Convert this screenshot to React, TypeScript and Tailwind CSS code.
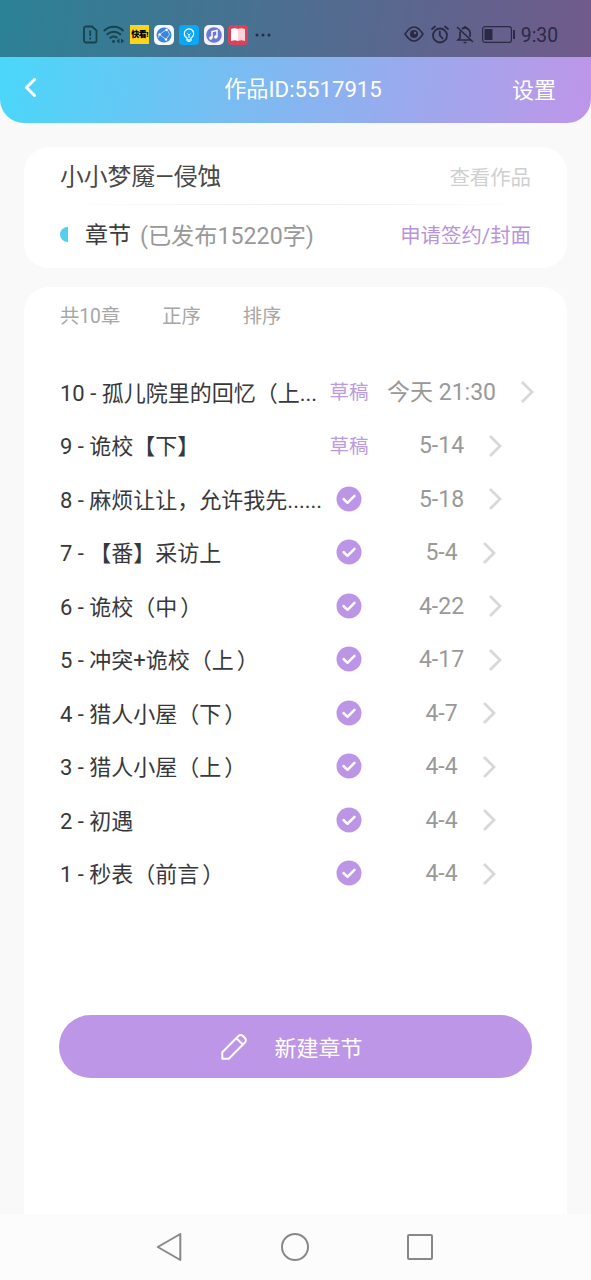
import React from "react";

interface chapterProps {
  title: string;
  date: string;
  draft?: boolean;
}

const chapters: chapterProps[] = [
  { title: "10 - 孤儿院里的回忆（上...", date: "今天 21:30", draft: true },
  { title: "9 - 诡校【下】", date: "5-14", draft: true },
  { title: "8 - 麻烦让让，允许我先......", date: "5-18" },
  { title: "7 - 【番】采访上", date: "5-4" },
  { title: "6 - 诡校（中）", date: "4-22" },
  { title: "5 - 冲突+诡校（上）", date: "4-17" },
  { title: "4 - 猎人小屋（下）", date: "4-7" },
  { title: "3 - 猎人小屋（上）", date: "4-4" },
  { title: "2 - 初遇", date: "4-4" },
  { title: "1 - 秒表（前言）", date: "4-4" },
];

// STATUS BAR
const StatusBar: React.FC = () => {
  return (
    <div className="h-[57px] bg-black/40 flex items-center justify-between pl-[83px] pr-[33px] pt-3">
      <div className="flex items-center">
        <svg width="15" height="19" viewBox="0 0 15 19" fill="none" stroke="#17434f" strokeWidth="1.800">
          <path d="M3 1.500h6l4.500 4v10a2 2 0 0 1-2 2H3a2 2 0 0 1-2-2v-12a2 2 0 0 1 2-2z" />
          <path d="M7.200 5.500v5.500M7.200 12.500v2" />
        </svg>
        <svg className="ml-[5px]" width="22" height="19" viewBox="0 0 22 19" fill="none" stroke="#17434f" strokeWidth="2" strokeLinecap="round">
          <path d="M1.500 5.500a13.500 13.500 0 0 1 18.500 0M4.300 9.300a9.500 9.500 0 0 1 13 0M7.300 12.800a5.500 5.500 0 0 1 6.500-.3" />
          <circle cx="10.500" cy="16.500" r="1.400" fill="#17434f" stroke="none" />
          <path d="M16.500 13.500v5l-3-2.500zM18 13.500l3.200 2.500-3.200 2.500z" fill="#17434f" stroke="none" />
        </svg>
        <div className="ml-[5px] size-[19px] bg-[#fbd51b] flex items-center justify-center">
          <span className="text-[8px] leading-none font-black text-black tracking-[-0.500px] whitespace-nowrap">快看!</span>
        </div>
        <svg className="ml-[5px]" width="20" height="20" viewBox="0 0 20 20">
          <rect width="20" height="20" rx="5" fill="#f4f9fd" />
          <circle cx="10" cy="10" r="7.500" fill="#3b86dd" />
          <path d="M13 4L5.500 9.500l6.500 5 3.500-5zM5.500 9.500L4 13" fill="none" stroke="#d5e8fa" strokeWidth=".8" />
          <circle cx="5.500" cy="9.500" r="1.200" fill="#fff" />
          <circle cx="12.500" cy="5" r="1.200" fill="#fff" />
          <circle cx="12" cy="14.500" r="1.200" fill="#fff" />
        </svg>
        <svg className="ml-[5px]" width="20" height="20" viewBox="0 0 20 20" fill="none" stroke="#fff" strokeWidth="1.300">
          <rect width="20" height="20" rx="4" fill="#0da8f3" stroke="none" />
          <path d="M8 12.800A4.700 4.700 0 1 1 12 12.800V15H8z" />
          <path d="M8.500 8.500L10 10l1.500-1.500M10 10v3M8.500 16.500h3" strokeWidth="1" />
        </svg>
        <svg className="ml-[5px]" width="20" height="20" viewBox="0 0 20 20">
          <rect width="20" height="20" rx="5" fill="#f3f2fc" />
          <circle cx="10" cy="10" r="7.800" fill="#6a78d6" />
          <path d="M8 13V6.500l5-1V12" fill="none" stroke="#fff" strokeWidth="1.500" />
          <circle cx="6.800" cy="13" r="1.700" fill="#fff" />
          <circle cx="11.800" cy="12" r="1.700" fill="#fff" />
        </svg>
        <svg className="ml-[4px]" width="20" height="20" viewBox="0 0 20 20">
          <rect width="20" height="20" rx="4" fill="#d8435c" />
          <path d="M3 4q4-1.500 7 0v12q-3-1.500-7 0z" fill="#fff" />
          <path d="M10 4q3-1.500 7 0v12q-4-1.500-7 0z" fill="#fbd3d9" />
        </svg>
        <svg className="ml-[7px]" width="16" height="4" viewBox="0 0 16 4" fill="#232f47">
          <circle cx="2" cy="2" r="1.500" />
          <circle cx="8" cy="2" r="1.500" />
          <circle cx="14" cy="2" r="1.500" />
        </svg>
      </div>

      <div className="flex items-center text-[#2b2a45]">
        <svg width="20" height="16" viewBox="0 0 20 16" fill="none" stroke="currentColor" strokeWidth="1.500">
          <path d="M1 8q9-14 18 0q-9 14-18 0z" />
          <circle cx="10" cy="8" r="4" fill="currentColor" stroke="none" />
          <circle cx="11" cy="7" r="1.200" fill="#63658f" stroke="none" />
        </svg>
        <svg className="ml-[7px]" width="18" height="19" viewBox="0 0 18 19" fill="none" stroke="currentColor" strokeWidth="1.800" strokeLinecap="round">
          <circle cx="9" cy="10.500" r="7" />
          <path d="M8.800 6.500v4l2.800 2.800M1 4l3-2.500M17 4l-3-2.500" />
        </svg>
        <svg className="ml-[7px]" width="18" height="19" viewBox="0 0 18 19" fill="none" stroke="currentColor" strokeWidth="1.700">
          <path d="M1 2l16 15M4 6.500V13l-2 2h12.500M6 4Q9 1.500 12 4t2 5v3M9 1v2M7.500 17.500h3" />
        </svg>
        <svg className="ml-[8px]" width="34" height="17" viewBox="0 0 34 17">
          <rect x=".6" y=".6" width="28.800" height="15.800" rx="2.500" fill="none" stroke="currentColor" strokeWidth="1.200" />
          <rect x="2.500" y="3" width="8" height="11" fill="currentColor" />
          <rect x="31" y="4" width="2" height="9" fill="currentColor" />
        </svg>
        <span className="ml-[5px] pt-[2px] text-[19.300px] leading-none">9:30</span>
      </div>
    </div>
  );
};

// HEADER
const Header: React.FC = () => {
  return (
    <div className="h-[123px] rounded-b-[24px] overflow-hidden bg-[linear-gradient(100deg,#48d8f9_0%,#bf95e8_100%)]">
      <StatusBar />
      <div className="h-[66px] grid grid-cols-[1fr_auto_1fr] items-center pl-6 pr-[35px] text-white">
        <svg className="mb-1" width="13" height="20" viewBox="0 0 13 20" fill="none" stroke="#fff" strokeWidth="3" strokeLinecap="round" strokeLinejoin="round">
          <path d="M10.500 1.500L2.500 9.500l8 8" />
        </svg>
        <p className="text-[22.200px] pl-[26px]">作品ID:5517915</p>
        <p className="text-[22px] text-right">设置</p>
      </div>
    </div>
  );
};

// WORK CARD
const WorkCard: React.FC = () => {
  return (
    <div className="mx-6 mt-6 h-[121px] bg-white rounded-[25px] px-9">
      <div className="h-[57px] pt-[5px] flex items-center justify-between">
        <p className="text-[23.800px] text-[#48484a]">小小梦魇—侵蚀</p>
        <p className="text-[20.400px] text-[#cfcfcf]">查看作品</p>
      </div>
      <div className="h-px bg-linear-to-r from-white via-[#ececec] to-white" />
      <div className="h-[60px] pt-[2px] flex items-center">
        <div className="mb-[4px] w-2 h-[15px] rounded-l-full bg-[#50d0ee]" />
        <p className="ml-[17px] text-[23px] text-[#3c3c3e]">章节</p>
        <p className="ml-[9px] text-[23.200px] text-[#999999]">(已发布15220字)</p>
        <p className="ml-auto text-[20.400px] text-[#b993dc]">申请签约/封面</p>
      </div>
    </div>
  );
};

const CheckIcon: React.FC = () => (
  <svg className="mb-[2px]" width="26" height="26" viewBox="0 0 26 26" fill="none">
    <circle cx="13" cy="13" r="12.500" fill="#bd95e6" />
    <path d="M7.500 13l4 3.800 7-7" stroke="#fff" strokeWidth="2.500" strokeLinecap="round" strokeLinejoin="round" />
  </svg>
);

const ChapterRow: React.FC<chapterProps> = ({ title, date, draft }) => {
  // leave some air before a closing parenthesis
  const closing = title.endsWith("）");

  return (
    <div className="h-[53.500px] grid grid-cols-[270px_38px_109px] items-center">
      <p className="pt-px text-[22px] text-[#38383b] whitespace-nowrap">
        {closing ? title.slice(0, -1) : title}
        {closing && <span className="ml-[3px]">）</span>}
      </p>
      <div className="flex justify-center whitespace-nowrap">
        {draft ? <p className="text-[19.500px] text-[#bd9be0]">草稿</p> : <CheckIcon />}
      </div>
      <div className="ml-[19px] w-[109px] flex items-center justify-center">
        <p className="text-[23px] text-[#999999] whitespace-nowrap">{date}</p>
        {/* takes no width, so the date stays centred */}
        <span className="w-0 flex">
          <svg className="ml-6 mb-px shrink-0" width="15" height="22" viewBox="0 0 15 22" fill="none" stroke="#d8d8d8" strokeWidth="2.800">
            <path d="M2 1l10 10L2 21" />
          </svg>
        </span>
      </div>
    </div>
  );
};

// CHAPTER LIST
const ChapterList: React.FC = () => {
  return (
    <div className="mx-6 mt-[19px] grow bg-white rounded-t-[25px] px-9 flex flex-col">
      <div className="h-[58px] pt-[3px] flex items-center gap-[42px] text-[19.300px] text-[#a6a6a6]">
        <p>共10章</p>
        <p>正序</p>
        <p>排序</p>
      </div>
      <div className="mt-[21px]">
        {chapters.map((el) => (
          <ChapterRow key={el.title} {...el} />
        ))}
      </div>
      <button className="mt-[114px] -mx-px h-[63px] w-[473px] rounded-full bg-[#be96e7] text-white flex items-center justify-center pr-[7px]">
        <svg width="26" height="26" viewBox="0 0 26 26" fill="none" stroke="#fff" strokeWidth="2" strokeLinejoin="round">
          <path d="M1.300 24.700v-6.500L17.700 1.800q2-1.500 4 0l2.500 2.500q1.300 2 0 4L7.800 24.700zM15.500 4.200l6.500 6.500" />
        </svg>
        <span className="ml-[27px] pt-[3px] text-[22px]">新建章节</span>
      </button>
    </div>
  );
};

// SYSTEM NAVIGATION
const NavBar: React.FC = () => {
  return (
    <div className="h-[66px] bg-[#fcfcfc] flex items-center justify-between pl-[156px] pr-[158px]">
      <svg width="26" height="28" viewBox="0 0 26 28" fill="none" stroke="#888" strokeWidth="2" strokeLinejoin="round">
        <path d="M24.300 1v26L1.800 14z" />
      </svg>
      <svg width="28" height="28" viewBox="0 0 28 28" fill="none" stroke="#888" strokeWidth="2">
        <circle cx="14" cy="14" r="13" />
      </svg>
      <svg width="26" height="26" viewBox="0 0 26 26" fill="none" stroke="#888" strokeWidth="2">
        <rect x="1" y="1" width="24" height="24" rx="1" />
      </svg>
    </div>
  );
};

const App: React.FC = () => {
  return (
    <div className="w-[591px] h-[1280px] overflow-hidden bg-[#f9f9f9] flex flex-col font-[Roboto,'Noto_Sans_CJK_SC',sans-serif]">
      <Header />
      <WorkCard />
      <ChapterList />
      <NavBar />
    </div>
  );
};

export default App;
